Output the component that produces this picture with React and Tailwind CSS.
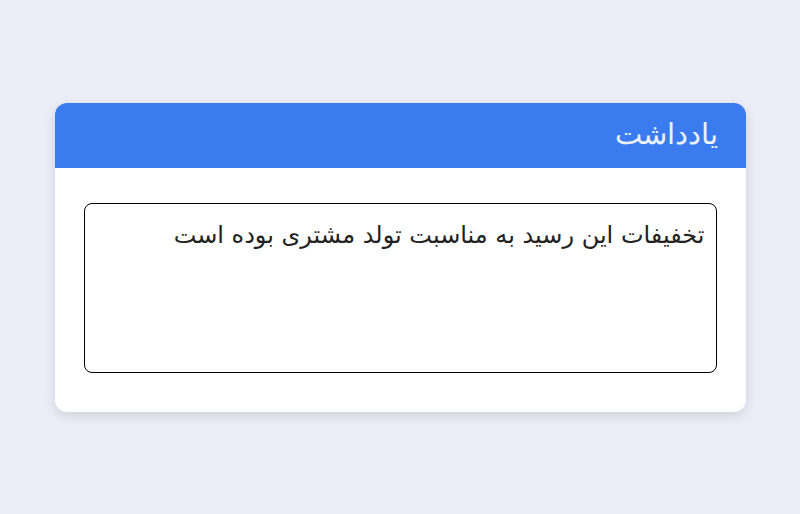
export default function App() {
  return (
    <div
      dir="rtl"
      className="flex min-h-[514px] items-center justify-center bg-[#ecedf6]"
      style={{ fontFamily: '"DejaVu Sans", sans-serif' }}
    >
      {/* Note card */}
      <div className="w-[691px] overflow-hidden rounded-xl bg-white shadow-[0_4px_12px_rgba(0,0,0,0.12)]">
        <div className="flex h-[65px] items-center bg-[#3b7bf0] px-7">
          <h2 className="text-[28.5px] font-light text-white/90">یادداشت</h2>
        </div>
        <div className="px-[29px] pt-[35px] pb-[39px]">
          <textarea
            readOnly
            defaultValue="تخفیفات این رسید به مناسبت تولد مشتری بوده است"
            className="block h-[170px] w-full resize-none rounded-lg border border-black px-[11px] py-[11px] text-[24px] leading-[40px] text-[#222] outline-none"
          />
        </div>
      </div>
    </div>
  )
}
